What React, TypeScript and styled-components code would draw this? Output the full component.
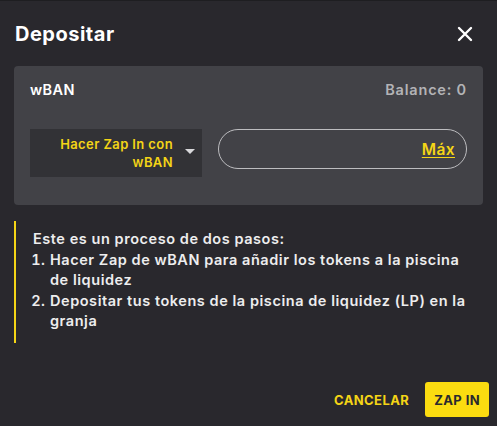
import React, { useState } from "react";
import styled, { createGlobalStyle } from "styled-components";

const GlobalStyle = createGlobalStyle`
  html, body {
    margin: 0;
    padding: 0;
    background: #29282d;
  }
  * {
    box-sizing: border-box;
  }
`;

const Dialog = styled.div`
  width: 497px;
  height: 426px;
  background: #29282d;
  border-top: 1px solid #1e1e21;
  font-family: Inter, "Noto Sans", sans-serif;
  color: #fff;
  display: flex;
  flex-direction: column;
  padding: 0 14px 0 14px;
`;

const Header = styled.header`
  display: flex;
  align-items: center;
  justify-content: space-between;
  height: 65px;
  padding: 0 10px 0 1px;
  h1 {
    margin: 0;
    font-size: 20px;
    font-weight: 700;
    letter-spacing: 0.5px;
  }
`;

const CloseButton = styled.button`
  background: none;
  border: none;
  padding: 0;
  display: flex;
  color: #fff;
  cursor: pointer;
`;

const Panel = styled.section`
  background: #424247;
  border-radius: 4px;
  padding: 15px 16px 28px 16px;
  display: flex;
  flex-direction: column;
  gap: 31px;
`;

const PanelTop = styled.div`
  display: flex;
  justify-content: space-between;
  align-items: center;
  font-size: 14.5px;
  font-weight: 600;
  letter-spacing: 0.4px;
  span:last-child {
    color: #b3b3b6;
    letter-spacing: 0.8px;
  }
`;

const Controls = styled.div`
  display: flex;
  align-items: flex-start;
  gap: 16px;
`;

const TokenSelect = styled.div`
  flex: 0 0 172px;
  height: 48px;
  background: #323236;
  display: flex;
  align-items: center;
  justify-content: flex-end;
  gap: 12px;
  padding: 0 7px 0 8px;
  color: #f4d516;
  font-size: 13px;
  font-weight: 600;
  letter-spacing: 0.4px;
  line-height: 18px;
  text-align: right;
  white-space: nowrap;
  cursor: pointer;
`;

const Caret = styled.span`
  width: 0;
  height: 0;
  border-left: 5px solid transparent;
  border-right: 5px solid transparent;
  border-top: 5px solid #d8d8db;
  margin-top: -4px;
`;

const AmountField = styled.label`
  flex: 1;
  min-width: 0;
  height: 40px;
  border: 1px solid #bdbdc0;
  border-radius: 20px;
  display: flex;
  align-items: center;
  padding: 0 11px 0 16px;
  input {
    flex: 1;
    width: 0;
    min-width: 0;
    background: transparent;
    border: none;
    outline: none;
    color: #fff;
    font: inherit;
    font-size: 15px;
  }
`;

const MaxLink = styled.button`
  background: none;
  border: none;
  padding: 0;
  color: #f4d516;
  font-family: inherit;
  font-size: 15.5px;
  font-weight: 600;
  letter-spacing: 0.4px;
  text-decoration: underline;
  text-underline-offset: 2px;
  cursor: pointer;
`;

const Note = styled.div`
  margin-top: 16px;
  border-left: 2px solid #f4d516;
  padding: 8px 14px 11px 17px;
  font-size: 14.5px;
  font-weight: 600;
  letter-spacing: 0.55px;
  line-height: 20.5px;
  color: #ededee;
  p {
    margin: 0;
  }
  ol {
    margin: 0;
    padding-left: 17px;
  }
`;

const Footer = styled.footer`
  margin-top: auto;
  display: flex;
  justify-content: flex-end;
  align-items: center;
  gap: 7px;
  padding-bottom: 9px;
  margin-right: -6px;
`;

const ActionButton = styled.button<{ $primary?: boolean }>`
  height: 35px;
  padding: 0 9px;
  border: none;
  border-radius: 3px;
  font-family: Inter, "Noto Sans", sans-serif;
  font-size: 13px;
  font-weight: 700;
  letter-spacing: 0.4px;
  cursor: pointer;
  background: ${(p) => (p.$primary ? "#fbdc10" : "transparent")};
  color: ${(p) => (p.$primary ? "#2a292e" : "#f4d516")};
`;

export default function App() {
  const [amount, setAmount] = useState("");

  return (
    <>
      <GlobalStyle />
      <Dialog>
        <Header>
          <h1>Depositar</h1>
          <CloseButton aria-label="close">
            <svg width="16" height="16" viewBox="0 0 16 16">
              <path
                d="M2 2 L14 14 M14 2 L2 14"
                stroke="#fff"
                strokeWidth="2.4"
                strokeLinecap="round"
              />
            </svg>
          </CloseButton>
        </Header>
        <Panel>
          <PanelTop>
            <span>wBAN</span>
            <span>Balance: 0</span>
          </PanelTop>
          <Controls>
            <TokenSelect>
              <span>
                Hacer Zap In con
                <br />
                wBAN
              </span>
              <Caret />
            </TokenSelect>
            <AmountField>
              <input value={amount} onChange={(e) => setAmount(e.target.value)} />
              <MaxLink>Máx</MaxLink>
            </AmountField>
          </Controls>
        </Panel>
        <Note>
          <p>Este es un proceso de dos pasos:</p>
          <ol>
            <li>Hacer Zap de wBAN para añadir los tokens a la piscina de liquidez</li>
            <li>Depositar tus tokens de la piscina de liquidez (LP) en la granja</li>
          </ol>
        </Note>
        <Footer>
          <ActionButton>CANCELAR</ActionButton>
          <ActionButton $primary>ZAP IN</ActionButton>
        </Footer>
      </Dialog>
    </>
  );
}
